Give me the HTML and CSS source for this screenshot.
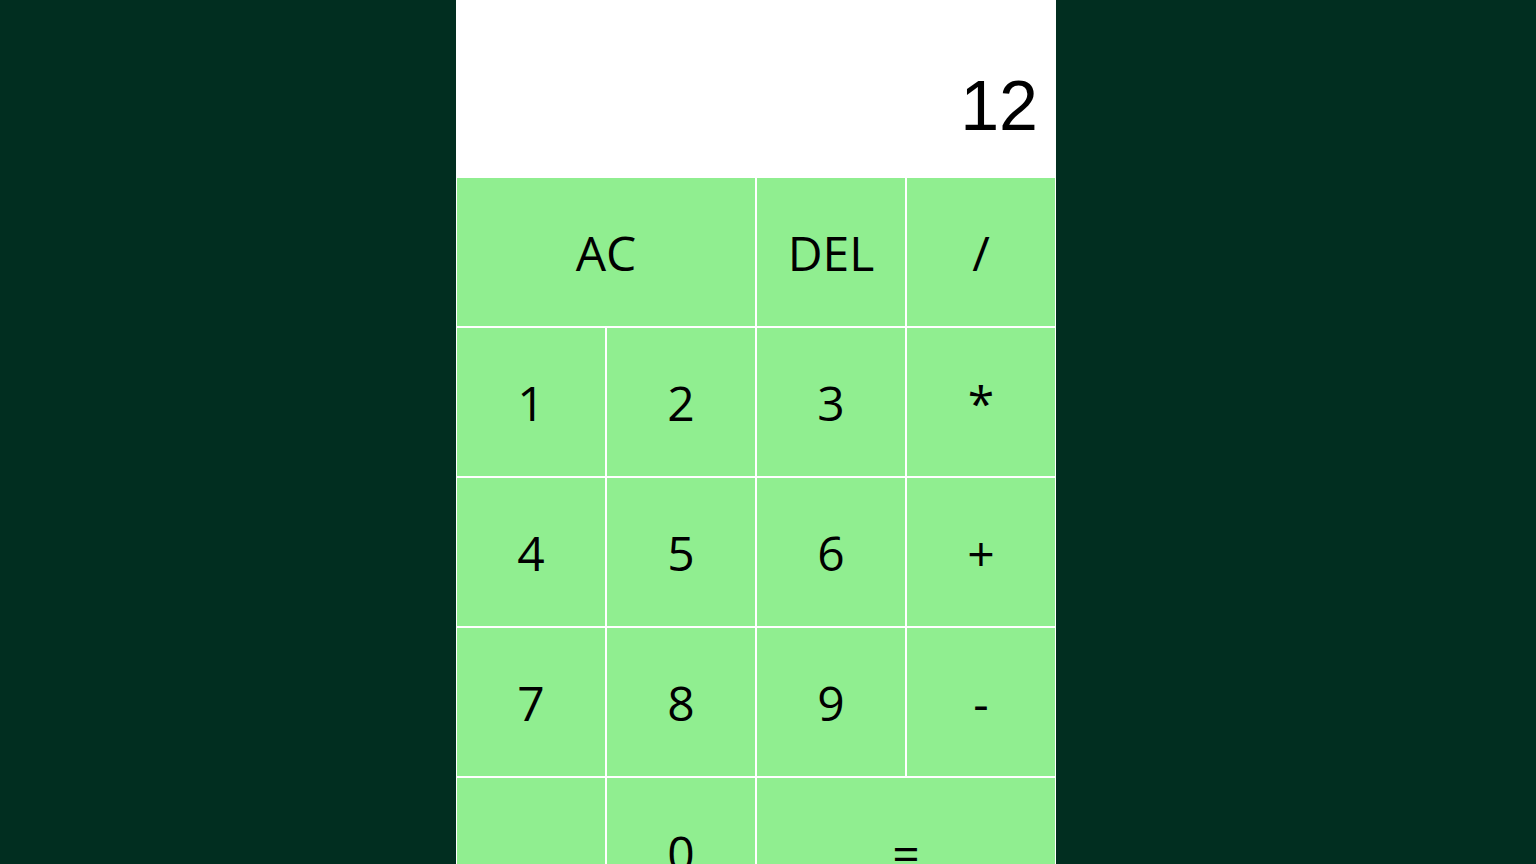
FILE: index.html
```html
<!DOCTYPE html>
<html lang="en">
<head>
<meta charset="utf-8">
<title>Calculator</title>
<link rel="stylesheet" href="styles.css">
</head>
<body>
<div class="page">
  <div class="calculator">
    <div class="output"><div class="current">12</div></div>
    <button class="key span-two">AC</button>
    <button class="key">DEL</button>
    <button class="key">/</button>
    <button class="key">1</button>
    <button class="key">2</button>
    <button class="key">3</button>
    <button class="key">*</button>
    <button class="key">4</button>
    <button class="key">5</button>
    <button class="key">6</button>
    <button class="key">+</button>
    <button class="key">7</button>
    <button class="key">8</button>
    <button class="key">9</button>
    <button class="key">-</button>
    <button class="key">.</button>
    <button class="key">0</button>
    <button class="key span-two">=</button>
  </div>
</div>
</body>
</html>
```
FILE: styles.css
```css
html, body {
  margin: 0;
  padding: 0;
  height: 100%;
  overflow: hidden;
  background: #012e20;
}

.page {
  display: flex;
  justify-content: center;
  padding-right: 24px;
}

.calculator {
  display: grid;
  grid-template-columns: repeat(4, 150px);
  grid-template-rows: 177px repeat(5, 150px);
}

.output {
  grid-column: 1 / -1;
  background: #ffffff;
  display: flex;
  flex-direction: column;
  justify-content: flex-end;
  align-items: flex-end;
  padding: 0 18px 31px;
}

.current {
  font-family: "Liberation Sans", Arial, sans-serif;
  font-size: 70px;
  line-height: normal;
  color: #000;
}

.key {
  font-family: "Open Sans", "Noto Sans", sans-serif;
  font-size: 48px;
  color: #000;
  background: #90ee90;
  border: 1px solid #ffffff;
  margin: 0;
  padding: 0;
  cursor: pointer;
}

.span-two {
  grid-column: span 2;
}
```
